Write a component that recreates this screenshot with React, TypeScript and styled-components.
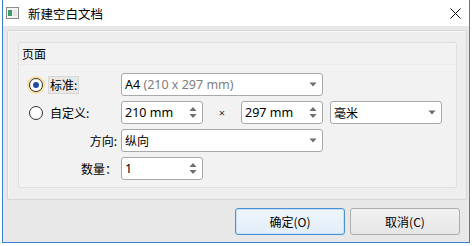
import React, { useState } from 'react';
import styled, { createGlobalStyle } from 'styled-components';

const GlobalStyle = createGlobalStyle`
  html, body {
    margin: 0;
    padding: 0;
    background: #ffffff;
  }
  body {
    font-family: "Noto Sans", "Noto Sans CJK SC", sans-serif;
    font-size: 12px;
    color: #000;
  }
`;

const Window = styled.div`
  box-sizing: border-box;
  width: 468px;
  height: 243px;
  margin-left: 2px;
  border: 1px solid #3b82d4;
  border-top: none;
  display: flex;
  flex-direction: column;
`;

const TitleBar = styled.div`
  height: 26px;
  background: #fff;
  display: flex;
  align-items: center;
  padding-left: 3px;
  flex-shrink: 0;
`;

const TitleText = styled.span`
  font-family: "Noto Sans CJK SC", sans-serif;
  font-size: 12.5px;
  margin-left: 9px;
  flex: 1;
`;

const CloseButton = styled.div`
  width: 28px;
  height: 26px;
  display: flex;
  align-items: center;
  justify-content: center;
`;

const Body = styled.div`
  flex: 1;
  background: #e8e8e8;
  padding: 4px 2px 0 4px;
  display: flex;
  flex-direction: column;
`;

const GroupFrame = styled.div`
  box-sizing: border-box;
  height: 170px;
  background: #eeeeee;
  border: 1px solid #d6d6d6;
  box-shadow: inset 1px 1px 0 #f7f7f7;
  border-radius: 2px;
  padding: 11px 9px 11px 10px;
`;

const Panel = styled.div`
  box-sizing: border-box;
  height: 146px;
  background: #f2f2f2;
  border: 1px solid #e0e0e0;
  border-radius: 2px;
  display: flex;
  flex-direction: column;
`;

const PanelTitle = styled.div`
  font-family: "Noto Sans CJK SC", sans-serif;
  height: 19px;
  line-height: 17px;
  padding: 2px 0 0 3px;
  border-bottom: 1px solid #ececec;
`;

const FormGrid = styled.div`
  display: grid;
  grid-template-columns: 92px 82px 38px 82px 7px 112px;
  grid-auto-rows: 23px;
  row-gap: 5px;
  padding: 8px 0 0 10px;
`;

const RadioLabel = styled.label`
  display: flex;
  align-items: center;
  cursor: default;
`;

const RadioCircle = styled.span<{ $checked?: boolean }>`
  box-sizing: border-box;
  width: 14px;
  height: 14px;
  border-radius: 50%;
  border: 1px solid #333;
  background: #fff;
  display: flex;
  align-items: center;
  justify-content: center;
  box-shadow: ${p => (p.$checked ? '0 0 0 2px #f5df9e' : 'none')};
  &::after {
    content: '';
    width: 6px;
    height: 6px;
    border-radius: 50%;
    background: ${p => (p.$checked ? '#1b4f9c' : 'transparent')};
  }
`;

const LabelText = styled.span<{ $focus?: boolean }>`
  font-family: "Noto Sans CJK SC", sans-serif;
  margin-left: 5px;
  padding: 0 1px;
  line-height: 16px;
  border: 1px solid ${p => (p.$focus ? '#d6d6d6' : 'transparent')};
  background: ${p => (p.$focus ? '#e8e8e8' : 'transparent')};
`;

const FieldLabel = styled.div`
  font-family: "Noto Sans CJK SC", sans-serif;
  display: flex;
  align-items: center;
  justify-content: flex-end;
  padding-right: 4px;
`;

const Field = styled.div<{ $span?: number; $col?: number }>`
  box-sizing: border-box;
  grid-column: ${p => p.$col ?? 'auto'} / span ${p => p.$span ?? 1};
  background: #fff;
  border: 1px solid #a9a9a9;
  border-radius: 3px;
  display: flex;
  align-items: center;
  padding: 0 0 0 3px;
  white-space: nowrap;
`;

const FieldText = styled.span<{ $cjk?: boolean }>`
  flex: 1;
  font-size: ${p => (p.$cjk ? '12px' : '12.5px')};
  font-family: ${p => (p.$cjk ? '"Noto Sans CJK SC", sans-serif' : '"Noto Sans", sans-serif')};
`;

const Hint = styled.span`
  color: #808080;
`;

const ArrowBox = styled.span`
  width: 18px;
  display: flex;
  align-items: center;
  justify-content: center;
`;

const Times = styled.div`
  display: flex;
  align-items: center;
  justify-content: center;
  font-size: 11px;
  color: #333;
`;

const ButtonRow = styled.div`
  display: flex;
  justify-content: flex-end;
  gap: 5px;
  padding: 8px 7px 0 0;
`;

const Button = styled.button<{ $primary?: boolean }>`
  box-sizing: border-box;
  width: 110px;
  height: 27px;
  font-family: "Noto Sans CJK SC", sans-serif;
  font-size: 12px;
  color: #000;
  border-radius: 3px;
  border: 1px solid ${p => (p.$primary ? '#4a90d9' : '#adadad')};
  background: ${p => (p.$primary ? 'linear-gradient(#eef5fc, #e3eef9)' : 'linear-gradient(#f1f1f1, #e6e6e6)')};
  box-shadow: ${p => (p.$primary ? 'inset 0 0 0 1px #c9e0f7' : 'none')};
  padding: 0;
`;

const DownArrow = () => (
  <svg width="8" height="5" viewBox="0 0 8 5">
    <path d="M0.5 0.5 L7.5 0.5 L4 4.5 Z" fill="#6d6d6d" />
  </svg>
);

const SpinArrows = () => (
  <svg width="8" height="13" viewBox="0 0 8 13">
    <path d="M0.5 5 L7.5 5 L4 1 Z" fill="#6d6d6d" />
    <path d="M0.5 8 L7.5 8 L4 12 Z" fill="#6d6d6d" />
  </svg>
);

const DocIcon = () => (
  <svg width="13" height="12" viewBox="0 0 13 12">
    <rect x="0.5" y="0.5" width="12" height="11" fill="#f4f4f4" stroke="#8a8a8a" />
    <rect x="2" y="3" width="4" height="6" fill="#3e9a6a" />
    <rect x="7" y="3" width="4" height="6" fill="#e6e6e6" />
  </svg>
);

const CloseIcon = () => (
  <svg width="11" height="11" viewBox="0 0 11 11">
    <path d="M0.5 0.5 L10.5 10.5 M10.5 0.5 L0.5 10.5" stroke="#111" strokeWidth="1" />
  </svg>
);

const App: React.FC = () => {
  const [mode, setMode] = useState<'std' | 'custom'>('std');

  return (
    <>
      <GlobalStyle />
      <Window>
        <TitleBar>
          <DocIcon />
          <TitleText>新建空白文档</TitleText>
          <CloseButton><CloseIcon /></CloseButton>
        </TitleBar>
        <Body>
          <GroupFrame>
            <Panel>
              <PanelTitle>页面</PanelTitle>
              <FormGrid>
                <RadioLabel onClick={() => setMode('std')}>
                  <RadioCircle $checked={mode === 'std'} />
                  <LabelText $focus={mode === 'std'}>标准:</LabelText>
                </RadioLabel>
                <Field $span={3}>
                  <FieldText>A4 <Hint>(210 x 297 mm)</Hint></FieldText>
                  <ArrowBox><DownArrow /></ArrowBox>
                </Field>
                <div style={{ gridColumn: '5 / span 2' }} />

                <RadioLabel onClick={() => setMode('custom')}>
                  <RadioCircle $checked={mode === 'custom'} />
                  <LabelText $focus={mode === 'custom'}>自定义:</LabelText>
                </RadioLabel>
                <Field>
                  <FieldText>210 mm</FieldText>
                  <ArrowBox><SpinArrows /></ArrowBox>
                </Field>
                <Times>×</Times>
                <Field>
                  <FieldText>297 mm</FieldText>
                  <ArrowBox><SpinArrows /></ArrowBox>
                </Field>
                <Field $col={6}>
                  <FieldText $cjk>毫米</FieldText>
                  <ArrowBox><DownArrow /></ArrowBox>
                </Field>

                <FieldLabel>方向:</FieldLabel>
                <Field $span={3}>
                  <FieldText $cjk>纵向</FieldText>
                  <ArrowBox><DownArrow /></ArrowBox>
                </Field>
                <div style={{ gridColumn: '5 / span 2' }} />

                <FieldLabel>数量：</FieldLabel>
                <Field>
                  <FieldText>1</FieldText>
                  <ArrowBox><SpinArrows /></ArrowBox>
                </Field>
              </FormGrid>
            </Panel>
          </GroupFrame>
          <ButtonRow>
            <Button $primary>确定(O)</Button>
            <Button>取消(C)</Button>
          </ButtonRow>
        </Body>
      </Window>
    </>
  );
};

export default App;
